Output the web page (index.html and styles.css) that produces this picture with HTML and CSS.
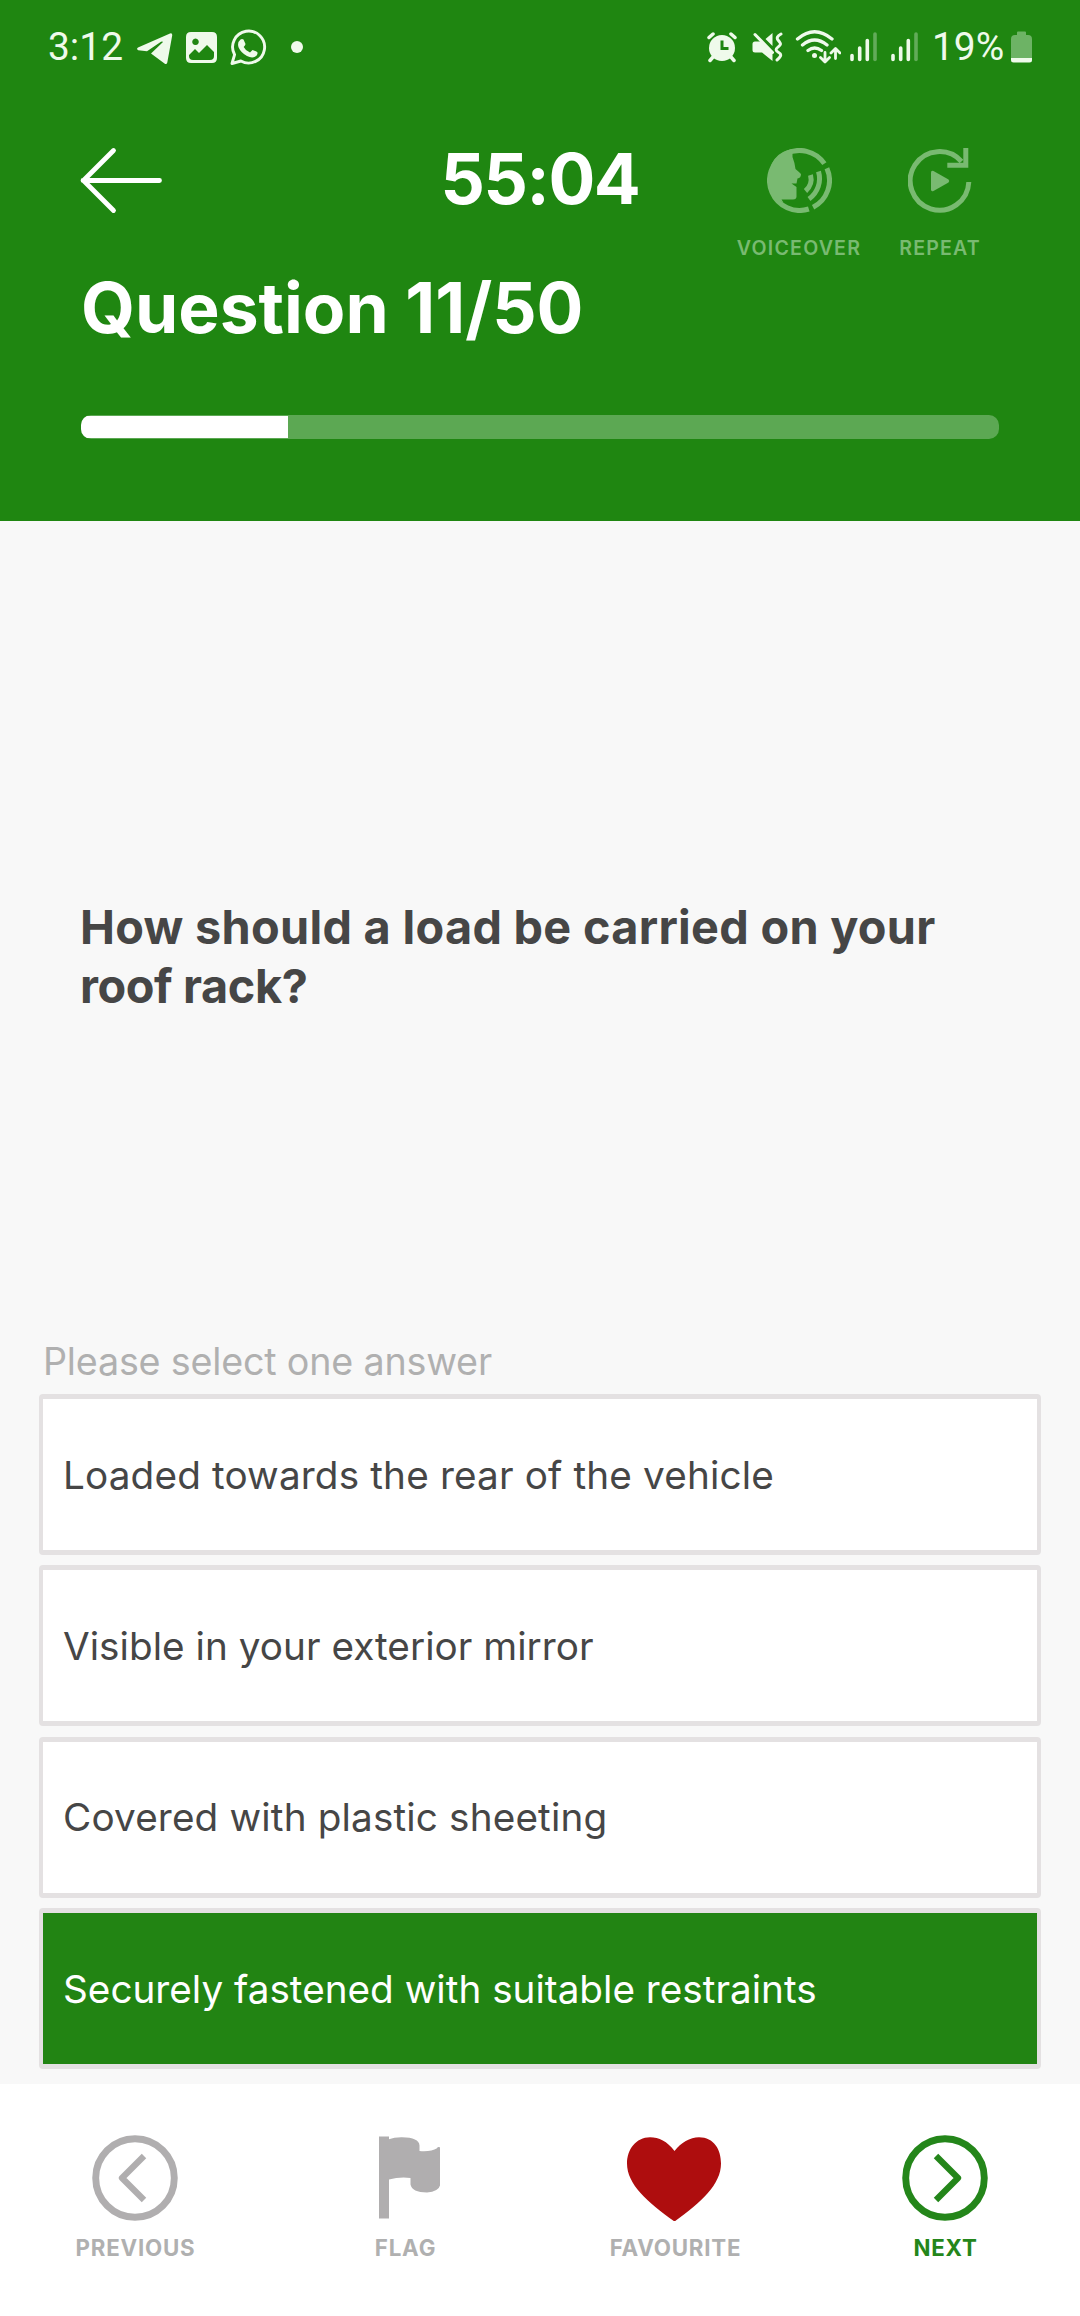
FILE: index.html
```
<!DOCTYPE html>
<html lang="en">
<head>
<meta charset="utf-8">
<title>Theory test</title>
<link rel="stylesheet" href="styles.css">
</head>
<body>
<div class="app">
  <header class="header">
    <div class="status">
      <div class="status-group">
        <span class="status-text clock">3:12</span>
        <svg class="telegram" width="36" height="40" viewBox="137 26 36 40"><path d="M138 47.500 L170 33.500 Q172.500 32.700 172.200 35.500 L167.300 62.500 Q166.600 65 164.500 63.500 L151 53.600 L163 42 Q162.500 41 161 41.700 L147 51.200 L138.200 50.200 Q136 49 138 47.500Z" fill="#effaeb"/></svg>
        <svg class="picture" width="31" height="40" viewBox="186 26 31 40"><path fill-rule="evenodd" d="M191 32h21q5 0 5 5v21q0 5-5 5h-21q-5 0-5-5v-21q0-5 5-5ZM189 56q0 4 4 4h17q4 0 4-4v-4l-7-7l-8 8l-4-4l-6 6ZM195.500 38.500a3.300 3.300 0 1 0 .01 0Z" fill="#effaeb"/></svg>
        <svg class="whatsapp" width="38" height="40" viewBox="230 26 38 40"><path d="M232 63.500l2.600-8.800a16 16 0 1 1 6.300 6.300Z" fill="none" stroke="#effaeb" stroke-width="2.900" stroke-linejoin="round"/><path d="M240.500 39.500q1.500-1 3 0l2 4.500q0 1-1.800 3q2 4 6.300 5.600l2.500-2.600q4.500 1.700 5 2.500q.5 2.600-2.500 4.300q-3.500 1.500-8-.8q-6-3-8.500-8.700q-1.500-5 2-7.800Z" fill="#effaeb"/></svg>
        <svg class="more" width="12" height="40" viewBox="291 26 12 40"><circle cx="297" cy="47" r="6" fill="#effaeb"/></svg>
      </div>
      <div class="status-group">
        <svg width="30" height="40" viewBox="706.500 26 30 40"><circle cx="721.500" cy="48" r="13" fill="#effaeb"/><path d="M708.500 37.500l4-3.500M734.500 37.500l-4-3.500M712.500 57l-3 3.500M730.500 57l3 3.500" stroke="#effaeb" stroke-width="3.500" stroke-linecap="round"/><path d="M721.500 40.500v8h6.500" fill="none" stroke="#1f8611" stroke-width="3"/></svg>
        <svg class="mute" width="31" height="40" viewBox="751.500 26 31 40"><path d="M752 44q0-2.500 2.500-2.500h5.500l12 12v7.500l-10.500-8.500h-7q-2.500 0-2.500-2.500ZM765 39l7-6v13Z" fill="#effaeb"/><path d="M754.500 34.500l17.500 18" stroke="#effaeb" stroke-width="3" stroke-linecap="round"/><path d="M780.500 34q-5.500 3-3 6t2.500 4t-3 3.500t.5 4.500t2.500 4t-3.500 4" fill="none" stroke="#effaeb" stroke-width="2.900" stroke-linecap="round"/></svg>
        <svg class="wifi" width="46" height="40" viewBox="795 26 46 40"><path d="M797.500 39q17-14.500 34.500 0M802.500 45q12-10 24.500 0M808 50.500q6.500-5 13.500 0" fill="none" stroke="#effaeb" stroke-width="3.300" stroke-linecap="round"/><circle cx="814.500" cy="55.500" r="2.500" fill="#effaeb"/><path d="M825 52.500v9M820.500 57.500l4.500 4.500l4.500-4.500M835.500 58.500v-9M831 53l4.500-4.500l4.500 4.500" fill="none" stroke="#effaeb" stroke-width="2.800" stroke-linecap="round" stroke-linejoin="round"/></svg>
        <svg class="signal" width="27" height="40" viewBox="850 26 27 40"><path d="M852 55.500v4M859.700 48v11.500M867.300 40.500v19" stroke="#effaeb" stroke-width="3.600" stroke-linecap="round"/><path d="M875 34v25.500" stroke="#62ab59" stroke-width="3.600" stroke-linecap="round"/></svg>
        <svg class="signal second" width="27" height="40" viewBox="850 26 27 40"><path d="M852 55.500v4M859.700 48v11.500M867.300 40.500v19" stroke="#effaeb" stroke-width="3.600" stroke-linecap="round"/><path d="M875 34v25.500" stroke="#62ab59" stroke-width="3.600" stroke-linecap="round"/></svg>
        <span class="status-text battery-level">19%</span>
        <svg class="battery" width="21" height="40" viewBox="1011 26 21 40"><path d="M1017 32.500q0-1 1-1h7q1 0 1 1v2.500h2q4 0 4 4v19h-21v-19q0-4 4-4h2Z" fill="#6db365"/><path d="M1011 58h21v2q0 2.500-2.500 2.500h-16q-2.500 0-2.500-2.500Z" fill="#effaeb"/></svg>
      </div>
    </div>
    <div class="topbar">
      <svg class="back" width="84" height="68" viewBox="80 147 84 68"><path d="M159.500 180.500H83M113.500 150.500L83.500 180.500L113.500 210.500" fill="none" stroke="#fff" stroke-width="4.800" stroke-linecap="round" stroke-linejoin="round"/></svg>
      <div class="timer">55:04</div>
      <div class="actions">
        <div class="action voice">
          <svg width="65" height="65" viewBox="767 148 65 65"><g fill="none" stroke="#79ba71" stroke-width="5"><path d="M824.400 163.700A30 30 0 1 0 808.800 209"/><path d="M826.900 168.300A30 30 0 0 1 813.100 207.200"/><path d="M818.500 171.500a25 25 0 0 1-9.500 27.500M810.500 175q2.500 9.500-5 16"/></g><path d="M792.500 149v8q2.500 6.500 3 12q3 2.500 5.500 5q0 4-3.500 4.500l-1 5h-5l5 3.500v9.500q0 3-3.500 3h-11.500l2 3q-14.500-7-15-22q1-28 24-31.500Z" fill="#79ba71"/></svg>
          <span>VOICEOVER</span>
        </div>
        <div class="action repeat">
          <svg width="65" height="65" viewBox="907.500 148 65 65"><path d="M968.300 182a29.300 29.300 0 1 1-7.300-20.500" fill="none" stroke="#79ba71" stroke-width="5"/><path d="M965.300 148v17.200h-18.500" fill="none" stroke="#79ba71" stroke-width="5"/><path d="M930.500 172.500q0-2.500 2.500-1.500l15 8.500q1.500 1.500 0 3l-15 8.500q-2.500 1-2.500-1.500Z" fill="#79ba71"/></svg>
          <span>REPEAT</span>
        </div>
      </div>
    </div>
    <h1 class="title">Question 11/50</h1>
    <div class="progress"><div class="progress-fill" style="width:22.5%"></div></div>
  </header>

  <main class="content">
    <div class="question">
      <p>How should a load be carried on your <span class="tight">roof rack?</span></p>
    </div>
    <div class="hint">Please select one answer</div>
    <div class="answers">
      <div class="answer"><span class="a1">Loaded towards the rear of the vehicle</span></div>
      <div class="answer"><span class="a2">Visible in your exterior mirror</span></div>
      <div class="answer"><span class="a3">Covered with plastic sheeting</span></div>
      <div class="answer selected"><span class="a4">Securely fastened with suitable restraints</span></div>
    </div>
  </main>

  <nav class="nav">
    <div class="nav-item">
      <svg width="86" height="86" viewBox="92 2135.500 86 86"><circle cx="135" cy="2178.500" r="39.300" fill="none" stroke="#b0aeaf" stroke-width="6.900"/><path d="M144 2156.500L122 2178.500L144 2200.500" fill="none" stroke="#b0aeaf" stroke-width="6.300" stroke-linejoin="round"/></svg>
      <span>PREVIOUS</span>
    </div>
    <div class="nav-item flag">
      <svg width="86" height="86" viewBox="362 2135.500 86 86"><path d="M379 2137h10v2.700q5-2 13-1.900q17 .2 17.500 8.200v5.500q11.500 1 17.500-2.800q.5-1.700 2.500-1.200q.7.500.5 2v36.500q-1.500 6-13 7q-15-.2-16.500-8v-6.500q-11-1.300-21.500 1.500v39h-10Z" fill="#b0aeaf"/></svg>
      <span>FLAG</span>
    </div>
    <div class="nav-item fav">
      <svg width="96" height="86" viewBox="627 2135.500 96 86"><path d="M674.500 2151.500C667 2141.500 659 2137.700 650 2137.700C636 2137.700 627 2150 627 2164C627 2185 648 2203 674.500 2222C701 2203 721 2185 721 2164C721 2150 714 2137.700 699 2137.700C690 2137.700 681 2143 674.500 2151.500Z" fill="#ae0d0e"/></svg>
      <span>FAVOURITE</span>
    </div>
    <div class="nav-item next">
      <svg width="86" height="86" viewBox="902 2135.500 86 86"><circle cx="945" cy="2178.500" r="39.300" fill="none" stroke="#24861a" stroke-width="6.900"/><path d="M936 2156.500L958 2178.500L936 2200.500" fill="none" stroke="#24861a" stroke-width="6.300" stroke-linejoin="round"/></svg>
      <span>NEXT</span>
    </div>
  </nav>
</div>
</body>
</html>
```

FILE: styles.css
```
* { box-sizing: border-box; }

body { margin: 0; background: #fff; }

svg { display: block; flex: none; }

.app {
  display: flex;
  flex-direction: column;
  width: 1080px;
  height: 2316px;
  font-family: Inter, "Liberation Sans", sans-serif;
  color: #464646;
  overflow: hidden;
}

/* Header */
.header {
  display: flex;
  flex-direction: column;
  height: 521px;
  flex: none;
  background: #1f8611;
  color: #fff;
}

.status {
  display: flex;
  justify-content: space-between;
  height: 137px;
  padding: 26px 48px 0 48px;
}

.status-group { display: flex; align-items: flex-start; }

.status-text {
  font-family: Roboto, sans-serif;
  font-size: 38.9px;
  line-height: 41px;
  color: #effaeb;
  white-space: nowrap;
}

.clock { width: 89px; }
.picture { margin-left: 13px; }
.whatsapp { margin-left: 13px; }
.more { margin-left: 23px; }
.mute { margin-left: 15px; }
.wifi { margin-left: 12.5px; }
.signal { margin-left: 9px; }
.second { margin-left: 14px; }
.battery-level { width: 79px; margin-left: 14px; }

.topbar {
  display: grid;
  grid-template-columns: 1fr auto 1fr;
  align-items: start;
  height: 129px;
  padding: 0 81px;
}

.back { margin-top: 10px; margin-left: -1px; }

.timer {
  font-size: 69.5px;
  line-height: 84px;
  font-weight: 700;
  letter-spacing: -1.4px;
}

.actions {
  display: flex;
  justify-self: end;
  gap: 38px;
  margin-top: 11px;
  margin-right: 18px;
}

.action {
  display: flex;
  flex-direction: column;
  align-items: center;
  gap: 23px;
  font-size: 19.6px;
  line-height: 24px;
  font-weight: 600;
  letter-spacing: 1.2px;
  color: #79ba71;
}

.title {
  margin: 0 81px;
  font-size: 69.5px;
  line-height: 84px;
  font-weight: 700;
}

.progress {
  height: 24px;
  margin: 65px 81px 0;
  padding: 1px 0;
  border-radius: 10px;
  background: #5ca853;
  overflow: hidden;
}

.progress-fill { height: 22px; background: #fff; }

/* Question and answers */
.content {
  display: flex;
  flex-direction: column;
  height: 1563px;
  padding: 0 39px 15px 39px;
  background: #f8f8f8;
}

.question {
  flex: 1;
  display: flex;
  align-items: center;
  padding: 55px 41px 0;
}

.question p {
  margin: 0;
  font-size: 46.8px;
  line-height: 59px;
  font-weight: 700;
  letter-spacing: 0.3px;
}

.tight { letter-spacing: -0.4px; }

.hint {
  padding-left: 4px;
  margin-bottom: 9px;
  font-size: 37.7px;
  line-height: 48px;
  letter-spacing: -0.2px;
  color: #b0b0b0;
}

.answers { display: flex; flex-direction: column; gap: 10.33px; }

.answer {
  display: flex;
  align-items: center;
  height: 161px;
  padding-left: 20px;
  border: 5px solid #e4e1e2;
  border-width: 5px 4px;
  border-radius: 4px;
  background: #fff;
  font-size: 38.7px;
  line-height: 48px;
}

.selected { background: #228413; color: #fff; }

.a1 { letter-spacing: 0.15px; }
.a2 { letter-spacing: 0.03px; }
.a3 { letter-spacing: 0.15px; }
.a4 { letter-spacing: 0; }

/* Bottom navigation */
.nav {
  display: grid;
  grid-template-columns: repeat(4, 1fr);
  flex: 1;
  padding-top: 51px;
  background: #fff;
}

.nav-item {
  display: flex;
  flex-direction: column;
  align-items: center;
  gap: 13px;
  font-size: 22.3px;
  line-height: 28px;
  font-weight: 700;
  letter-spacing: 0.8px;
  color: #b0b0b0;
}

.nav-item span { padding-left: 1px; }

.next { color: #24861a; }
```
